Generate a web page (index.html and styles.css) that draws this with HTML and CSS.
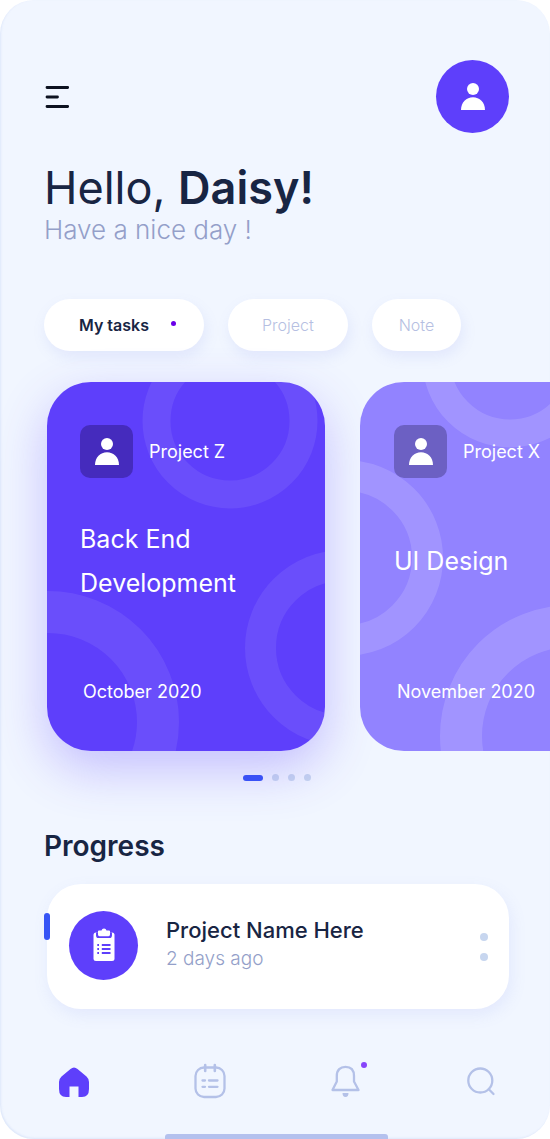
FILE: index.html
```html
<!DOCTYPE html>
<html lang="en">
<head>
<meta charset="utf-8">
<meta name="viewport" content="width=device-width, initial-scale=1">
<title>My tasks</title>
<link rel="stylesheet" href="styles.css">
</head>
<body>
<svg class="defs" aria-hidden="true">
  <symbol id="person" viewBox="0 0 24 28">
    <circle cx="12" cy="6" r="6"/>
    <path d="M0 27C0 19.300 5.400 14.300 12 14.300S24 19.300 24 27Z"/>
  </symbol>
</svg>
<div class="screen">
  <header class="topbar">
    <button class="menu" aria-label="Menu">
      <svg width="26" height="24" viewBox="0 0 26 24" fill="none" stroke="#0d1220" stroke-width="2.800" stroke-linecap="round"><path d="M3 2.500H23.700M3 12H13.500M3 21.500H23.700"/></svg>
    </button>
    <button class="avatar" aria-label="Profile"><svg class="person"><use href="#person"/></svg></button>
  </header>

  <main>
    <h1 class="hello">Hello, <strong>Daisy!</strong></h1>
    <p class="greeting">Have a nice day !</p>

    <div class="tabs">
      <button class="tab tab-active">My tasks<span class="tab-dot"></span></button>
      <button class="tab">Project</button>
      <button class="tab tab-small">Note</button>
    </div>

    <section class="cards" aria-label="Projects">
      <article class="card card-strong">
        <svg class="rings" viewBox="0 0 278 369" fill="none" stroke="#fff" stroke-opacity=".08">
          <circle cx="183" cy="39" r="73.500" stroke-width="28"/>
          <circle cx="296" cy="266" r="82.500" stroke-width="31"/>
          <circle cx="1" cy="340" r="110" stroke-width="42"/>
        </svg>
        <div class="card-head"><span class="badge"><svg class="person"><use href="#person"/></svg></span>Project Z</div>
        <h2 class="card-title">Back End Development</h2>
        <p class="card-date">October 2020</p>
      </article>
      <article class="card card-soft">
        <svg class="rings" viewBox="0 0 278 369" fill="none" stroke="#fff" stroke-opacity=".14">
          <circle cx="150" cy="-22" r="73.500" stroke-width="28"/>
          <circle cx="-15" cy="176" r="82.500" stroke-width="31"/>
          <circle cx="211" cy="354" r="110" stroke-width="42"/>
        </svg>
        <div class="card-head"><span class="badge"><svg class="person"><use href="#person"/></svg></span>Project X</div>
        <h2 class="card-title">UI Design</h2>
        <p class="card-date">November 2020</p>
      </article>
    </section>

    <div class="pager"><span class="page-current"></span><span></span><span></span><span></span></div>

    <h2 class="section-title">Progress</h2>
    <article class="progress">
      <span class="marker"></span>
      <span class="progress-icon">
        <svg width="24" height="34" viewBox="0 0 24 34">
          <rect x="1.500" y="4.500" width="21" height="28.500" rx="2.500" fill="#fff"/>
          <path d="M4.800 4.500V7.500Q4.800 9.300 6.500 9.300H17.300Q19.200 9.300 19.200 7.500V4.500" fill="#5e3ffb" stroke="#5e3ffb" stroke-width="1.500"/>
          <path d="M6 3.300Q6 2.500 7 2.500H9.500Q10 .5 12 .5T14.500 2.500H17Q18 2.500 18 3.300V6.500Q18 8.300 16.500 8.300H7.500Q6 8.300 6 6.500Z" fill="#fff"/>
          <path d="M5.300 17H7M9.800 17H18.500M5.300 21H7M9.800 21H18.500M5.300 25H7M9.800 25H18.500" stroke="#5e3ffb" stroke-width="1.800"/>
        </svg>
      </span>
      <div class="progress-text">
        <h3 class="progress-name">Project Name Here</h3>
        <p class="progress-time">2 days ago</p>
      </div>
      <button class="more" aria-label="More"><span></span><span></span></button>
    </article>
  </main>

  <nav class="nav">
    <a href="#home" aria-label="Home"><svg width="32" height="36" viewBox="0 0 32 36"><path d="M12.500 5Q16 2 19.500 5L28.500 12.500Q31 14.800 31 18V25Q31 33 24 33H20.500V22.500H11.500V33H8Q1 33 1 25V18Q1 14.800 3.500 12.500Z" fill="#5e3ffb"/></svg></a>
    <a href="#calendar" aria-label="Calendar"><svg width="32" height="36" viewBox="0 0 32 36" fill="none" stroke="#b4c1e8" stroke-width="2.300" stroke-linecap="round"><rect x="1.500" y="3.500" width="29" height="29.500" rx="8.500"/><path d="M11.200 1V7M20.800 1V7" stroke-width="2.600"/><path d="M8.500 16.500H11M15 16.500H23.500M8.500 22.800H11M15 22.800H23.500"/></svg></a>
    <a class="alerts" href="#alerts" aria-label="Notifications"><svg width="32" height="36" viewBox="0 0 32 36" fill="none" stroke="#b4c1e8" stroke-width="2.300" stroke-linejoin="round"><path d="M3.500 26L7.800 17.500V12C7.800 6 11.300 2.800 16.500 2.800S25 6 25 12V17.500L29.500 26Z"/><path d="M13.500 29H19.500Q19.500 33 16.500 33T13.500 29Z" fill="#b4c1e8" stroke="none"/></svg></a>
    <a href="#search" aria-label="Search"><svg width="32" height="36" viewBox="0 0 32 36" fill="none" stroke="#b4c1e8" stroke-width="2.300" stroke-linecap="round"><circle cx="15.300" cy="16.500" r="12"/><path d="M23.800 25.300L28.500 30"/></svg></a>
  </nav>
  <div class="home-bar"></div>
</div>
</body>
</html>
```
FILE: styles.css
```css
* { box-sizing: border-box; margin: 0; padding: 0; }
body { background: #fff; font-family: Inter, "Open Sans", sans-serif; color: #182543; }
button { border: 0; background: none; font: inherit; color: inherit; cursor: pointer; }
.defs { position: absolute; width: 0; height: 0; }

.screen {
  display: flex;
  flex-direction: column;
  min-height: 100vh;
  padding: 60px 41px 0 44px;
  border-radius: 34px;
  overflow: hidden;
  background: #f1f6ff;
  box-shadow: inset 1px -1px 2px rgba(180, 200, 240, .3);
}

.topbar { display: flex; justify-content: space-between; align-items: center; }
.menu, .menu svg { display: block; }
.avatar {
  display: grid;
  place-items: center;
  width: 73px;
  height: 73px;
  border-radius: 50%;
  background: #5e3ffb;
}
.person { width: 24px; height: 28px; fill: #fff; }

.hello { margin-top: 27px; font-size: 45px; line-height: 56px; font-weight: 400; }
.hello strong { font-weight: 600; }
.greeting { font-size: 26px; line-height: 28px; font-weight: 300; color: #949fc9; }

.tabs { display: flex; gap: 24px; margin-top: 55px; }
.tab {
  display: flex;
  align-items: center;
  height: 52px;
  padding: 0 34px;
  border-radius: 26px;
  background: #fff;
  box-shadow: 2px 6px 14px rgba(120, 140, 235, .13);
  font-size: 16px;
  font-weight: 300;
  color: #b6bfe2;
}
.tab-active { gap: 22px; padding: 0 28px 0 35px; font-weight: 600; color: #182543; }
.tab-small { padding: 0 27px; }
.tab-dot { width: 5px; height: 5px; margin-bottom: 3px; border-radius: 50%; background: #6a00e8; }

.cards { display: flex; gap: 35px; margin: 31px -41px 0 3px; }
.card {
  position: relative;
  display: flex;
  flex: none;
  flex-direction: column;
  width: 278px;
  min-height: 369px;
  padding: 43px 33px 46px;
  border-radius: 44px;
  color: #fff;
  font-weight: 400;
}
.card-strong {
  background: #5e3ffb;
  box-shadow: 0 18px 50px rgba(94, 63, 251, .3);
}
.card-soft { padding-left: 34px; background: #9283ff; }
.rings { position: absolute; inset: 0; width: 100%; height: 100%; border-radius: 44px; overflow: hidden; }
.card-head, .card-title, .card-date { position: relative; }
.card-head { display: flex; align-items: center; gap: 16px; font-size: 18px; }
.badge {
  display: grid;
  place-items: center;
  width: 53px;
  height: 53px;
  border-radius: 10px;
  background: #452bbd;
}
.card-soft .badge { background: #6c60c3; }
.card-title {
  display: flex;
  align-items: center;
  height: 88px;
  margin-top: 39px;
  font-size: 25px;
  line-height: 44px;
  font-weight: 400;
}
.card-date { margin: auto 0 0 3px; font-size: 18px; line-height: 26px; white-space: nowrap; }

.pager { display: flex; justify-content: center; align-items: center; gap: 9px; margin: 23px 0 0; }
.pager span { width: 7px; height: 7px; border-radius: 4px; background: #c7d6ef; }
.pager .page-current { width: 20px; height: 6px; background: #3654f5; }

.section-title { margin-top: 47px; font-size: 28px; line-height: 36px; font-weight: 600; }
.progress {
  position: relative;
  display: flex;
  align-items: center;
  min-height: 125px;
  margin: 20px 0 0 3px;
  padding: 0 18px 3px 22px;
  border-radius: 34px;
  background: #fff;
  box-shadow: 2px 6px 16px rgba(120, 140, 235, .12);
}
.marker {
  position: absolute;
  left: -3px;
  top: 29px;
  width: 6px;
  height: 27px;
  border-radius: 3px;
  background: #3654f5;
}
.progress-icon {
  display: grid;
  place-items: center;
  width: 69px;
  height: 69px;
  border-radius: 50%;
  background: #5e3ffb;
}
.progress-text { flex: 1; margin-left: 28px; padding-bottom: 3px; }
.progress-name { font-size: 22px; line-height: 30px; font-weight: 500; }
.progress-time { font-size: 19px; line-height: 28px; font-weight: 300; color: #949fc9; }
.more { display: flex; flex-direction: column; gap: 12px; padding: 5px 3px 2px; }
.more span { width: 8px; height: 8px; border-radius: 50%; background: #c7d6ef; }

.nav { display: flex; justify-content: space-between; margin-top: 55px; padding: 0 12px 0 14px; }
.nav a, .nav svg { display: block; overflow: visible; }
.alerts { position: relative; }
.alerts::after {
  content: "";
  position: absolute;
  right: -6px;
  top: -2px;
  width: 6px;
  height: 6px;
  border-radius: 50%;
  background: #8745fb;
}
.home-bar {
  width: 48%;
  height: 5px;
  margin: auto auto 0;
  border-radius: 3px 3px 0 0;
  background: #b4c1ee;
}
@media (min-width: 500px) {
  .home-bar { width: 223px; }
}
```
